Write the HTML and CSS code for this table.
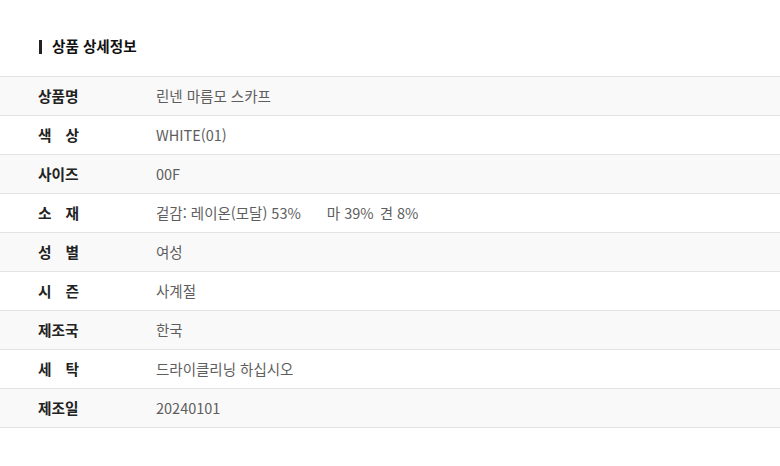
FILE: index.html
```html
<!DOCTYPE html>
<html lang="ko">
<head>
<meta charset="utf-8">
<link rel="stylesheet" href="styles.css">
</head>
<body>
<section class="detail">
  <h2 class="title">상품 상세정보</h2>
  <div class="table">
    <div class="row"><div class="label"><span>상품명</span></div><div class="value">린넨 마름모 스카프</div></div>
    <div class="row"><div class="label"><span>색 상</span></div><div class="value">WHITE(01)</div></div>
    <div class="row"><div class="label"><span>사이즈</span></div><div class="value">00F</div></div>
    <div class="row"><div class="label"><span>소 재</span></div><div class="value"><span class="part">겉감: 레이온(모달) 53%</span><span class="part gap">마 39%</span><span class="part">견 8%</span></div></div>
    <div class="row"><div class="label"><span>성 별</span></div><div class="value">여성</div></div>
    <div class="row"><div class="label"><span>시 즌</span></div><div class="value">사계절</div></div>
    <div class="row"><div class="label"><span>제조국</span></div><div class="value">한국</div></div>
    <div class="row"><div class="label"><span>세 탁</span></div><div class="value">드라이클리닝 하십시오</div></div>
    <div class="row"><div class="label"><span>제조일</span></div><div class="value">20240101</div></div>
  </div>
</section>
</body>
</html>
```
FILE: styles.css
```css
* { box-sizing: border-box; }
html, body { margin: 0; padding: 0; background: #fff; }
body {
  font-family: "Noto Sans CJK KR", "Noto Sans", sans-serif;
  color: #222;
  width: 780px;
  height: 466px;
  overflow: hidden;
}
.detail { padding-top: 35px; }
.title {
  margin: 0 0 19px 0;
  padding-left: 52px;
  position: relative;
  font-size: 14.6px;
  font-weight: 700;
  line-height: 22px;
  color: #111;
}
.title::before {
  content: "";
  position: absolute;
  left: 39px;
  top: 5px;
  width: 3px;
  height: 14px;
  background: #222;
}
.table { border-top: 1px solid #e2e2e2; }
.row {
  display: flex;
  align-items: center;
  height: 39px;
  padding-bottom: 2px;
  border-bottom: 1px solid #e2e2e2;
}
.row:nth-child(odd) { background: #f9f9f9; }
.label {
  width: 156px;
  padding-left: 38px;
  font-size: 14.7px;
  font-weight: 700;
  color: #222;
}
.label span {
  display: block;
  width: 41px;
  text-align: justify;
  text-align-last: justify;
}
.value {
  font-size: 14.5px;
  font-weight: 400;
  color: #5e5e5e;
}
.part.gap { margin-left: 26px; margin-right: 6px; }
```
